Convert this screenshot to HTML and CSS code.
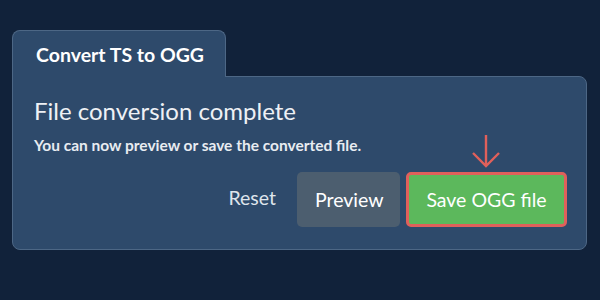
FILE: index.html
```html
<!DOCTYPE html>
<html lang="en">

<head>
  <meta charset="UTF-8" />
  <meta name="viewport" content="width=device-width, initial-scale=1.0" />
  <title>Convert TS to OGG</title>
  <link rel="stylesheet" href="styles.css">
</head>

<body>
  <div class="converter">
    <div class="tab">Convert TS to OGG</div>
    <div class="panel">
      <h2>File conversion complete</h2>
      <p>You can now preview or save the converted file.</p>
      <div class="actions">
        <button class="btn btn-reset">Reset</button>
        <button class="btn btn-preview">Preview</button>
        <div class="save-wrap">
          <svg class="arrow" width="30" height="34" viewBox="0 0 30 34">
            <path d="M15 1 V32 M2 19 L15 32 L28 19" fill="none" stroke="#e0605b" stroke-width="2.4" />
          </svg>
          <button class="btn btn-save">Save OGG file</button>
        </div>
      </div>
    </div>
  </div>
</body>

</html>
```

FILE: styles.css
```css
body {
  font-family: 'Lato', 'Noto Sans', sans-serif;
  margin: 0;
  padding: 30px 13px 0 12px;
  background-color: #11223a;
  color: #f4f4f9;
}

.converter {
  display: flex;
  flex-direction: column;
  align-items: flex-start;
}

.tab {
  position: relative;
  margin-bottom: -1px;
  padding: 12px 21px 11px 23px;
  white-space: nowrap;
  font-size: 19.5px;
  font-weight: bold;
  color: white;
  background-color: #2e4a6b;
  border: 1px solid #4d6785;
  border-bottom: none;
  border-radius: 8px 8px 0 0;
}

.panel {
  align-self: stretch;
  padding: 19px 19px 22px 21px;
  background-color: #2e4a6b;
  border: 1px solid #4d6785;
  border-radius: 0 8px 8px 8px;
}

.panel h2 {
  margin: 0;
  font-size: 24px;
  font-weight: normal;
  line-height: 30px;
  color: #eef1f5;
}

.panel p {
  margin: 10px 0 0 0;
  font-size: 15.5px;
  font-weight: bold;
  color: #e8ecf1;
}

.actions {
  display: flex;
  justify-content: flex-end;
  align-items: center;
  gap: 6px;
  margin-top: 18px;
}

.btn {
  font-family: 'Lato', 'Noto Sans', sans-serif;
  font-size: 19.5px;
  color: white;
  border: none;
  border-radius: 5px;
  height: 55px;
  cursor: pointer;
}

.btn-reset {
  background: none;
  color: #dfe5ec;
  padding: 0 17px;
  margin-right: -2px;
  margin-top: -4px;
}

.btn-preview {
  background-color: #4c5e6f;
  padding: 0 18px;
  width: 103px;
}

.save-wrap {
  position: relative;
}

.arrow {
  position: absolute;
  left: 65px;
  top: -38px;
}

.btn-save {
  background-color: #5cb85c;
  border: 3px solid #e0605b;
  width: 161px;
  padding: 0;
}
```
